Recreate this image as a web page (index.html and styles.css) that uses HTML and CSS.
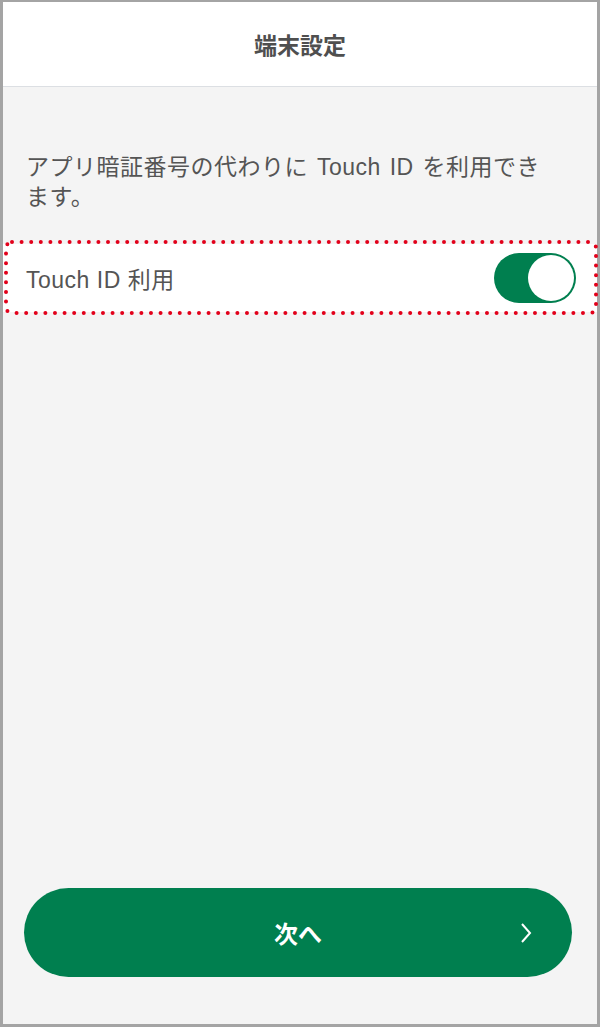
FILE: index.html
```html
<!DOCTYPE html>
<html lang="ja">
<head>
    <meta charset="UTF-8">
    <meta name="viewport" content="width=device-width, initial-scale=1.0">
    <title>端末設定</title>
    <link rel="stylesheet" href="styles.css">
</head>
<body>

<div class="screen">
    <header class="top-bar">
        <h1>端末設定</h1>
    </header>

    <p class="intro">アプリ暗証番号の代わりに Touch ID を利用できます。</p>

    <div class="setting-row">
        <span class="setting-label">Touch ID 利用</span>
        <span class="toggle"><span class="knob"></span></span>

        <!-- annotation around the row -->
        <svg class="highlight" width="594" height="75" viewBox="0 0 594 75">
            <rect x="2" y="2" width="590" height="71" rx="6" ry="6"
                  fill="none" stroke="#e2001a" stroke-width="4"
                  stroke-dasharray="0 9.6" stroke-linecap="round"/>
        </svg>
    </div>

    <div class="bottom-area">
        <button type="button" class="next-button">
            次へ
            <svg class="chevron" width="12" height="20" viewBox="0 0 12 20">
                <polyline points="2,1 10,10 2,19" fill="none" stroke="#fff" stroke-width="2"/>
            </svg>
        </button>
    </div>
</div>

</body>
</html>
```

FILE: styles.css
```css
html, body {
    margin: 0;
    padding: 0;
}

body {
    font-family: "Liberation Sans", "Noto Sans CJK JP", sans-serif;
    background-color: #f4f4f4;
}

.screen {
    box-sizing: border-box;
    width: 600px;
    height: 1027px;
    border: 3px solid #a4a4a4;
    border-top-width: 2px;
    background-color: #f4f4f4;
    display: flex;
    flex-direction: column;
}

.top-bar {
    height: 84px;
    background-color: white;
    border-bottom: 1px solid #dcdfe3;
    display: flex;
    align-items: center;
    justify-content: center;
}

.top-bar h1 {
    margin: 0;
    font-family: "Noto Sans CJK JP", sans-serif;
    font-size: 23px;
    font-weight: 700;
    color: #4f4f4f;
}

.intro {
    width: 522px;
    margin: 65px 0 0 23px;
    font-size: 23px;
    line-height: 30px;
    color: #555;
    letter-spacing: 0.5px;
    word-spacing: 2px;
}

.setting-row {
    position: relative;
    height: 68px;
    margin-top: 32px;
    padding: 0 21px 0 23px;
    background-color: white;
    display: flex;
    align-items: center;
    justify-content: space-between;
}

.setting-label {
    font-size: 23px;
    color: #555;
    letter-spacing: 0.5px;
}

.toggle {
    box-sizing: border-box;
    width: 82px;
    height: 50px;
    border-radius: 25px;
    background-color: #007f4f;
    padding: 2px;
    display: flex;
    justify-content: flex-end;
}

.knob {
    width: 46px;
    height: 46px;
    border-radius: 50%;
    background-color: white;
}

.highlight {
    position: absolute;
    top: -4px;
    left: 1px;
}

.bottom-area {
    margin-top: auto;
    padding: 0 25px 47px 21px;
}

.next-button {
    position: relative;
    width: 100%;
    height: 89px;
    border: none;
    border-radius: 45px;
    background-color: #007f4f;
    color: white;
    font-family: "Noto Sans CJK JP", sans-serif;
    font-size: 24px;
    font-weight: 700;
    padding: 0;
    cursor: pointer;
}

.chevron {
    position: absolute;
    right: 40px;
    top: 35px;
}
```
